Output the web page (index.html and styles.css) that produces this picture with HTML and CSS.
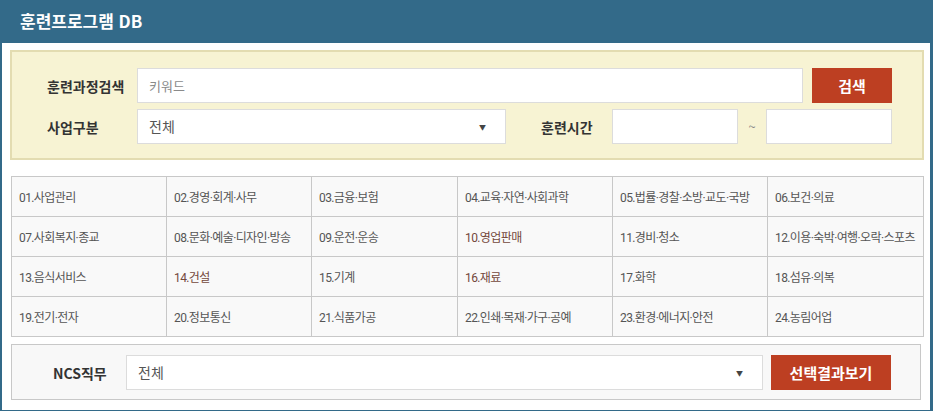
FILE: index.html
```html
<!DOCTYPE html>
<html lang="ko">
<head>
  <meta charset="UTF-8">
  <title>훈련프로그램 DB</title>
  <link rel="stylesheet" href="styles.css">
</head>
<body>
  <div class="db">
    <div class="db-head">훈련프로그램 DB</div>

    <div class="search">
      <div class="search-row">
        <label class="label">훈련과정검색</label>
        <div class="field keyword">키워드</div>
        <button class="btn btn-search">검색</button>
      </div>
      <div class="search-row">
        <label class="label">사업구분</label>
        <div class="field select biz">전체<span class="arrow">&#9660;</span></div>
        <label class="label time-label">훈련시간</label>
        <div class="field time"></div>
        <span class="tilde">~</span>
        <div class="field time"></div>
      </div>
    </div>

    <table class="ncs-grid">
      <colgroup>
        <col style="width:155px">
        <col style="width:145px">
        <col style="width:146px">
        <col style="width:155px">
        <col style="width:155px">
        <col style="width:156px">
      </colgroup>
      <tr>
        <td>01.사업관리</td>
        <td>02.경영·회계·사무</td>
        <td>03.금융·보험</td>
        <td>04.교육·자연·사회과학</td>
        <td>05.법률·경찰·소방·교도·국방</td>
        <td>06.보건·의료</td>
      </tr>
      <tr>
        <td>07.사회복지·종교</td>
        <td>08.문화·예술·디자인·방송</td>
        <td>09.운전·운송</td>
        <td class="visited">10.영업판매</td>
        <td>11.경비·청소</td>
        <td>12.이용·숙박·여행·오락·스포츠</td>
      </tr>
      <tr>
        <td>13.음식서비스</td>
        <td class="visited">14.건설</td>
        <td>15.기계</td>
        <td class="visited">16.재료</td>
        <td>17.화학</td>
        <td>18.섬유·의복</td>
      </tr>
      <tr>
        <td>19.전기·전자</td>
        <td>20.정보통신</td>
        <td>21.식품가공</td>
        <td>22.인쇄·목재·가구·공예</td>
        <td>23.환경·에너지·안전</td>
        <td>24.농림어업</td>
      </tr>
    </table>

    <div class="ncs-job">
      <label class="label ncs-label">NCS직무</label>
      <div class="field select job">전체<span class="arrow">&#9660;</span></div>
      <button class="btn btn-result">선택결과보기</button>
    </div>
  </div>
</body>
</html>
```

FILE: styles.css
```css
body {
  margin: 0;
  font-family: "Noto Sans CJK KR", "Noto Sans", sans-serif;
  background: #ffffff;
}

.db {
  width: 928px;
  border-style: solid;
  border-color: #336a89;
  border-width: 0 3px 2px 2px;
  padding-bottom: 10px;
}

.db-head {
  height: 43px;
  margin: 0 -3px 0 -2px;
  padding-left: 20px;
  background: #336a89;
  color: #ffffff;
  font-size: 17px;
  font-weight: bold;
  line-height: 42px;
}

/* search box */
.search {
  margin: 7px 6px 0 8px;
  padding: 16px 0 14px 35px;
  background: #f7f3d3;
  border: 2px solid #e3dcb1;
}

.search-row {
  display: flex;
  align-items: center;
  height: 35px;
}

.search-row + .search-row {
  margin-top: 6px;
}

.label {
  width: 90px;
  font-size: 14px;
  font-weight: bold;
  color: #333333;
}

.field {
  box-sizing: border-box;
  height: 35px;
  padding: 0 11px;
  background: #ffffff;
  border: 1px solid #dcdcdc;
  font-size: 13px;
  line-height: 33px;
  color: #555555;
}

.keyword {
  width: 666px;
  color: #8a8a8a;
}

.select {
  position: relative;
  font-size: 14px;
}

.arrow {
  position: absolute;
  top: 1px;
  right: 19px;
  font-size: 7px;
  color: #444444;
}

.biz {
  width: 369px;
}

.time-label {
  width: 71px;
  margin-left: 35px;
}

.time {
  width: 126px;
}

.tilde {
  width: 28px;
  text-align: center;
  font-size: 13px;
  color: #888888;
}

.btn {
  height: 35px;
  border: none;
  background: #bd3f22;
  color: #ffffff;
  font-family: inherit;
  font-size: 15px;
  font-weight: bold;
  cursor: pointer;
}

.btn-search {
  width: 80px;
  margin-left: 9px;
}

/* ncs grid */
.ncs-grid {
  width: 912px;
  margin: 16px 0 0 9px;
  border-collapse: collapse;
  table-layout: fixed;
}

.ncs-grid td {
  height: 39px;
  padding: 0 0 0 7px;
  background: #f9f9f9;
  border: 1px solid #c8c8c8;
  font-family: Roboto, "Noto Sans CJK KR", sans-serif;
  font-size: 12px;
  letter-spacing: -0.6px;
  color: #555555;
  white-space: nowrap;
  overflow: hidden;
}

.ncs-grid td.visited {
  color: #74483c;
}

/* ncs job */
.ncs-job {
  display: flex;
  align-items: center;
  width: 910px;
  margin: 7px 0 0 9px;
  padding: 10px 0 9px 41px;
  box-sizing: border-box;
  background: #f8f8f8;
  border: 1px solid #c8c8c8;
}

.ncs-label {
  width: 73px;
}

.job {
  width: 637px;
}

.btn-result {
  width: 120px;
  margin-left: 8px;
}
```
